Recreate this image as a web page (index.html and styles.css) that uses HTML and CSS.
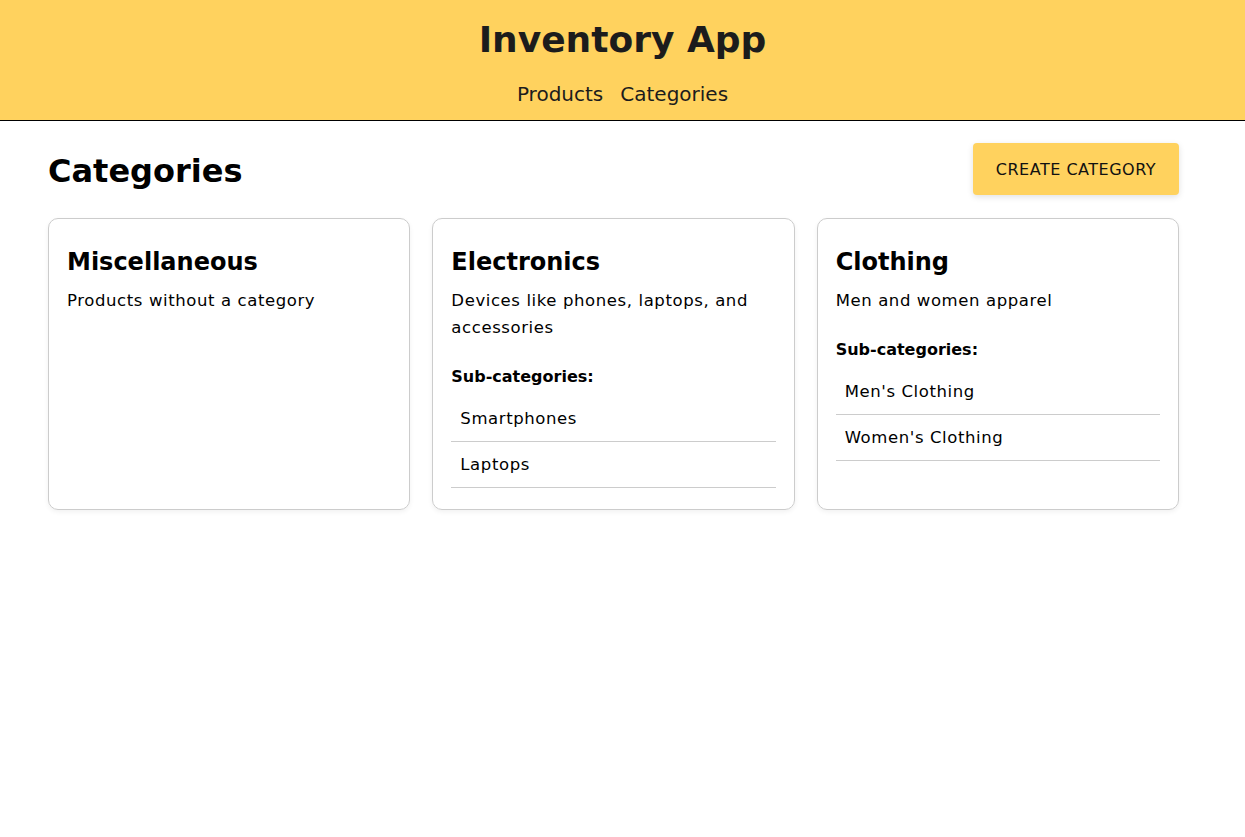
FILE: index.html
```html
<!DOCTYPE html>
<html lang="en">
<head>
<meta charset="utf-8">
<title>Inventory App</title>
<link rel="stylesheet" href="styles.css">
</head>
<body>
<header class="site-header">
  <h1 class="site-title">Inventory App</h1>
  <nav class="site-nav">
    <a href="#" class="nav-link">Products</a>
    <a href="#" class="nav-link">Categories</a>
  </nav>
</header>
<main class="page">
  <div class="page-head">
    <h2 class="page-title">Categories</h2>
    <button class="btn-create">CREATE CATEGORY</button>
  </div>
  <div class="card-grid">
    <section class="card">
      <h3 class="card-title">Miscellaneous</h3>
      <p class="card-desc">Products without a category</p>
    </section>
    <section class="card">
      <h3 class="card-title">Electronics</h3>
      <p class="card-desc">Devices like phones, laptops, and accessories</p>
      <h4 class="sub-title">Sub-categories:</h4>
      <ul class="sub-list">
        <li class="sub-item">Smartphones</li>
        <li class="sub-item">Laptops</li>
      </ul>
    </section>
    <section class="card">
      <h3 class="card-title">Clothing</h3>
      <p class="card-desc">Men and women apparel</p>
      <h4 class="sub-title">Sub-categories:</h4>
      <ul class="sub-list">
        <li class="sub-item">Men's Clothing</li>
        <li class="sub-item">Women's Clothing</li>
      </ul>
    </section>
  </div>
</main>
</body>
</html>
```
FILE: styles.css
```css
* { box-sizing: border-box; }
body {
  margin: 0;
  font-family: "DejaVu Sans", "Open Sans", sans-serif;
  color: #000;
  background: #fff;
}
.site-header {
  background: #ffd25e;
  border-bottom: 1px solid #000;
  padding: 12px 0 12px;
  text-align: center;
  color: #1c1c1c;
}
.site-title {
  margin: 0;
  font-size: 36px;
  line-height: 56px;
  font-weight: 700;
}
.site-nav {
  margin-top: 12px;
  display: flex;
  justify-content: center;
  gap: 17px;
}
.nav-link {
  font-size: 20px;
  line-height: 28px;
  color: #1c1c1c;
  text-decoration: none;
}
.page {
  padding: 22px 66px 22px 48px;
}
.page-head {
  display: flex;
  justify-content: space-between;
  align-items: center;
  height: 52px;
}
.page-title {
  margin: 0;
  padding-top: 4px;
  font-size: 32px;
  font-weight: 700;
}
.btn-create {
  height: 52px;
  padding: 0 23px;
  border: none;
  border-radius: 4px;
  background: #ffd25e;
  color: #111;
  font-family: inherit;
  font-size: 16px;
  letter-spacing: 0.5px;
  box-shadow: 0 2px 6px rgba(0,0,0,0.12);
}
.card-grid {
  margin-top: 23px;
  display: grid;
  grid-template-columns: repeat(3, 1fr);
  gap: 22px;
}
.card {
  border: 1px solid #ccc;
  border-radius: 10px;
  padding: 25px 18px 21px;
  box-shadow: 0 2px 5px rgba(0,0,0,0.06);
}
.card-title {
  margin: 0;
  font-size: 24px;
  line-height: 36px;
  font-weight: 700;
}
.card-desc {
  margin: 7px 0 0;
  font-size: 16.5px;
  letter-spacing: 0.6px;
  line-height: 27px;
}
.sub-title {
  margin: 22px 0 0;
  font-size: 16px;
  line-height: 27px;
  font-weight: 700;
}
.sub-list {
  list-style: none;
  margin: 6px 0 0;
  padding: 0;
}
.sub-item {
  padding: 10px 9px;
  font-size: 16.5px;
  letter-spacing: 0.6px;
  line-height: 25px;
  border-bottom: 1px solid #ccc;
}
```
